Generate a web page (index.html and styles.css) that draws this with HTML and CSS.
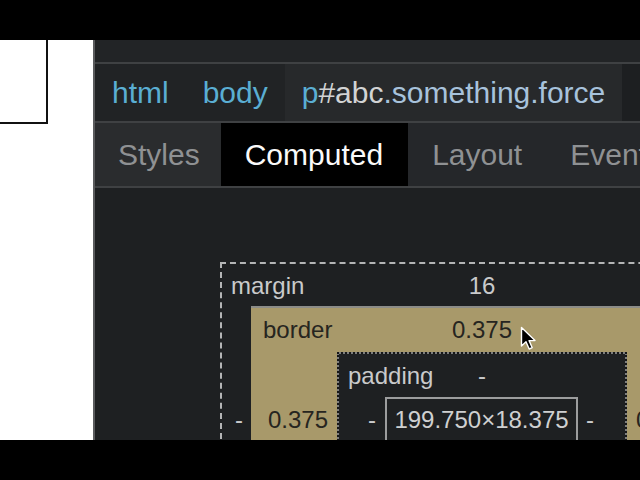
FILE: index.html
```html
<!DOCTYPE html>
<html>
<head>
<meta charset="utf-8">
<link rel="stylesheet" href="styles.css">
</head>
<body>
<div class="bar"></div>
<div class="main">
  <div class="page">
    <div class="pbox"></div>
  </div>
  <div class="devtools">
    <div class="strip"></div>
    <div class="crumbs">
      <span class="crumb">html</span>
      <span class="crumb">body</span>
      <span class="crumb current"><span class="tag">p</span><span class="id">#abc</span><span class="cls">.something.force</span></span>
    </div>
    <div class="tabs">
      <span class="tab first">Styles</span>
      <span class="tab active">Computed</span>
      <span class="tab">Layout</span>
      <span class="tab">Event</span>
    </div>
    <div class="content">
      <div class="mbox">
        <div class="toprow">
          <span class="lbl">margin</span>
          <span class="val">16</span>
          <span></span>
        </div>
        <div class="mrow">
          <span class="side mside left">-</span>
          <div class="bbox">
            <div class="toprow brow">
              <span class="lbl">border</span>
              <span class="val">0.375</span>
              <span></span>
            </div>
            <div class="bmid">
              <span class="side bside left">0.375</span>
              <div class="pbox2">
                <div class="toprow prow">
                  <span class="lbl">padding</span>
                  <span class="val">-</span>
                  <span></span>
                </div>
                <div class="pmid">
                  <span class="side pside left">-</span>
                  <div class="cbox">199.750×18.375</div>
                  <span class="side pside right">-</span>
                </div>
              </div>
              <span class="side bside right">0</span>
            </div>
          </div>
          <span class="side mside right">-</span>
        </div>
      </div>
      <svg class="cursor" width="18" height="26" viewBox="0 0 18 26">
        <path d="M1.5 1.5 L1.5 20 L6 15.8 L9.2 23 L12.2 21.7 L9.1 14.6 L15 14.6 Z" fill="#000" stroke="#fff" stroke-width="1.4" stroke-linejoin="round"/>
      </svg>
    </div>
  </div>
</div>
<div class="bar"></div>
</body>
</html>
```

FILE: styles.css
```css
html, body {
  margin: 0;
  padding: 0;
  background: #000;
  font-family: "Liberation Sans", Arial, sans-serif;
}
.bar {
  height: 40px;
  background: #000;
}
.main {
  display: flex;
  height: 400px;
  overflow: hidden;
}
.page {
  width: 93px;
  flex: none;
  background: #fff;
}
.pbox {
  width: 46px;
  height: 82px;
  border-right: 2px solid #111;
  border-bottom: 2px solid #111;
}
.devtools {
  flex: 1;
  display: flex;
  flex-direction: column;
  border-left: 2px solid #5a5b5d;
  background: #1e2022;
  overflow: hidden;
  position: relative;
}
.strip {
  height: 22px;
  background: #222426;
  border-bottom: 2px solid #3f4143;
  flex: none;
}
.crumbs {
  height: 57px;
  display: flex;
  align-items: stretch;
  background: #1d1f21;
  border-bottom: 2px solid #3f4143;
  flex: none;
  font-size: 30px;
}
.crumb {
  display: flex;
  align-items: center;
  padding: 0 17px;
  color: #5aaed3;
  background: #212325;
  white-space: nowrap;
}
.crumb.current {
  background: #27292b;
}
.tag { color: #5aaed3; }
.id { color: #d2d3d4; }
.cls { color: #a7c2dc; }
.tabs {
  height: 63px;
  display: flex;
  align-items: stretch;
  background: #25272a;
  border-bottom: 2px solid #3f4143;
  flex: none;
  font-size: 30px;
}
.tab {
  display: flex;
  align-items: center;
  padding: 0 24px;
  color: #8f9193;
  white-space: nowrap;
}
.tab.first {
  padding-left: 23px;
  padding-right: 21px;
  background: #2a2c2e;
}
.tab.active {
  padding-right: 25px;
  background: #000;
  color: #fafafa;
}
.content {
  flex: 1;
  padding: 74px 0 0 125px;
  background: #1e2022;
  font-size: 24px;
  position: relative;
}
.mbox {
  width: 520px;
  border: 2px dashed #b4b5b6;
}
.toprow {
  display: grid;
  grid-template-columns: 1fr auto 1fr;
  align-items: center;
  height: 42px;
  color: #c9cacb;
}
.lbl {
  padding-left: 9px;
  padding-top: 2px;
}
.val {
  padding-top: 2px;
}
.mrow {
  display: grid;
  grid-template-columns: 29px 462px 29px;
  align-items: start;
}
.side {
  line-height: 40px;
  color: #c9cacb;
  white-space: nowrap;
}
.side.left {
  text-align: right;
}
.side.right {
  text-align: left;
}
.mside {
  padding-top: 94px;
}
.mside.left {
  padding-right: 8px;
}
.mside.right {
  padding-left: 8px;
}
.bbox {
  background: #a8996a;
  border-top: 2px solid #8c8c88;
  height: 300px;
}
.brow {
  height: 44px;
  color: #26251f;
}
.brow .lbl {
  padding-left: 12px;
  padding-top: 0;
}
.brow .val {
  padding-top: 0;
}
.bmid {
  display: grid;
  grid-template-columns: 86px 290px 86px;
  align-items: start;
}
.bside {
  color: #26251f;
  padding-top: 48px;
}
.bside.left {
  padding-right: 9px;
}
.bside.right {
  padding-left: 9px;
}
.pbox2 {
  border: 2px dotted #161718;
  background: linear-gradient(#1e2022, #1e2022) padding-box, #7d7e7e border-box;
  height: 200px;
}
.prow {
  height: 43px;
}
.prow .lbl {
  padding-top: 0;
}
.prow .val {
  padding-top: 0;
}
.pmid {
  display: grid;
  grid-template-columns: 46px 193px 1fr;
  align-items: start;
}
.pside {
  padding-top: 2px;
  line-height: 42px;
}
.pside.left {
  padding-right: 9px;
}
.pside.right {
  padding-left: 8px;
}
.cbox {
  border: 2px solid #9c9d9e;
  line-height: 42px;
  height: 80px;
  text-align: center;
  color: #cfd0d1;
}
.cursor {
  position: absolute;
  left: 425px;
  top: 138px;
}
```
